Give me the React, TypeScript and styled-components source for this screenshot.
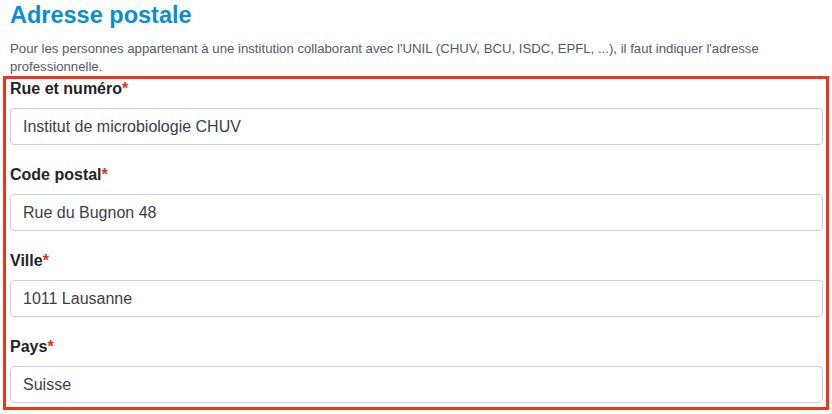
import React from "react";
import styled, { createGlobalStyle } from "styled-components";

const Global = createGlobalStyle`
  html, body { margin: 0; padding: 0; background: #ffffff; }
  body { font-family: "Liberation Sans", Arial, Helvetica, sans-serif; }
  * { box-sizing: border-box; }
`;

const Page = styled.div`
  width: 832px;
  padding: 1px 0 0 0;
`;

const Intro = styled.div`
  padding: 0 10px;
`;

const Title = styled.h2`
  margin: 0;
  font-size: 23.5px;
  line-height: 28px;
  font-weight: 700;
  color: #0b8dd2;
`;

const Description = styled.p`
  margin: 11px 0 0 0;
  font-size: 13.2px;
  line-height: 18px;
  color: #555a60;
`;

const Highlight = styled.div`
  margin: 0 3px;
  border: 3px solid #f5331b;
  padding: 0.5px 3px 4px 4px;
  display: flex;
  flex-direction: column;
  gap: 20.5px;
`;

const Field = styled.div`
  display: flex;
  flex-direction: column;
`;

const Label = styled.label`
  font-size: 16px;
  line-height: 17px;
  font-weight: 700;
  color: #222426;
  margin-bottom: 11.5px;
`;

const Required = styled.span`
  color: #ee2a1a;
`;

const Input = styled.input`
  height: 37px;
  width: 100%;
  border: 1px solid #ccd1d8;
  border-radius: 4px;
  padding: 0 12px;
  font-family: "Liberation Sans", Arial, Helvetica, sans-serif;
  font-size: 16px;
  color: #3a3f45;
  background: #ffffff;
  outline: none;
`;

const fields = [
  { label: "Rue et numéro", value: "Institut de microbiologie CHUV" },
  { label: "Code postal", value: "Rue du Bugnon 48" },
  { label: "Ville", value: "1011 Lausanne" },
  { label: "Pays", value: "Suisse" },
];

export default function App() {
  return (
    <Page>
      <Global />
      <Intro>
        <Title>Adresse postale</Title>
        <Description>
          Pour les personnes appartenant à une institution collaborant avec l'UNIL (CHUV, BCU, ISDC, EPFL, ...), il faut indiquer l'adresse professionnelle.
        </Description>
      </Intro>
      <Highlight>
        {fields.map((f) => (
          <Field key={f.label}>
            <Label>
              {f.label}
              <Required>*</Required>
            </Label>
            <Input defaultValue={f.value} readOnly />
          </Field>
        ))}
      </Highlight>
    </Page>
  );
}
